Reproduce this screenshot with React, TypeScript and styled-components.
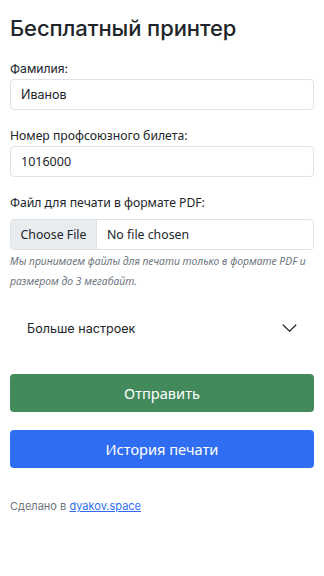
import styled, { createGlobalStyle } from "styled-components";

const GlobalStyle = createGlobalStyle`
  * { box-sizing: border-box; }
  body {
    margin: 0;
    background: #fff;
    color: #212529;
    font-family: Inter, "Noto Sans", sans-serif;
  }
`;

export default function App() {
  return (
    <>
      <GlobalStyle />
      <Page>
        <Title>Бесплатный принтер</Title>

        <Field>
          <Label>Фамилия:</Label>
          <Input defaultValue="Иванов" />
        </Field>

        <Field>
          <Label $humanist>Номер профсоюзного билета:</Label>
          <Input $humanist defaultValue="1016000" />
        </Field>

        <Field>
          <Label $humanist $gap={7}>
            Файл для печати в формате PDF:
          </Label>
          <FileBox>
            <FileButton>Choose File</FileButton>
            <FileName>No file chosen</FileName>
          </FileBox>
          <Hint>
            Мы принимаем файлы для печати только в формате PDF и размером до 3
            мегабайт.
          </Hint>
        </Field>

        <Accordion>
          <span>Больше настроек</span>
          <svg width="15" height="8" viewBox="0 0 15 8" fill="none">
            <path d="M0.8 0.8l6.7 6.4 6.7-6.4" stroke="#212529" strokeWidth="1.2" />
          </svg>
        </Accordion>

        <Button $color="#428a5b">Отправить</Button>
        <Button $color="#2f6ef3">История печати</Button>

        <Footer>
          Сделано в <a href="#">dyakov.space</a>
        </Footer>
      </Page>
    </>
  );
}

const Page = styled.div`
  padding: 13px 10px 40px;
  display: flex;
  flex-direction: column;
`;

const Title = styled.h1`
  margin: 0 0 17px;
  font-size: 22px;
  font-weight: 500;
  line-height: 30px;
  letter-spacing: -0.1px;
`;

const Field = styled.div`
  display: flex;
  flex-direction: column;
  margin-bottom: 17px;
`;

const Label = styled.label<{ $humanist?: boolean; $gap?: number }>`
  font-family: ${(p) => (p.$humanist ? '"Noto Sans", sans-serif' : "Inter, sans-serif")};
  font-size: 12.2px;
  line-height: 18px;
  margin-bottom: ${(p) => p.$gap ?? 1}px;
`;

const Input = styled.input<{ $humanist?: boolean }>`
  height: 31px;
  padding: 0 10px;
  border: 1px solid #dee2e6;
  border-radius: 4px;
  font-family: ${(p) => (p.$humanist ? '"Noto Sans", sans-serif' : "Inter, sans-serif")};
  font-size: 12.5px;
  color: #212529;
  outline: none;
`;

const FileBox = styled.div`
  display: flex;
  height: 31px;
  border: 1px solid #dee2e6;
  border-radius: 4px;
  overflow: hidden;
  font-family: "Noto Sans", sans-serif;
  font-size: 12.3px;
`;

const FileButton = styled.div`
  width: 86px;
  display: flex;
  align-items: center;
  justify-content: center;
  background: #e9ecef;
  border-right: 1px solid #dee2e6;
`;

const FileName = styled.div`
  display: flex;
  align-items: center;
  padding-left: 10px;
`;

const Hint = styled.div`
  margin-top: 1px;
  font-family: "Noto Sans", sans-serif;
  font-style: italic;
  font-size: 10.4px;
  line-height: 20px;
  color: #6c757d;
`;

const Accordion = styled.div`
  height: 46px;
  margin: -3px 0 23px;
  padding: 0 17px;
  display: flex;
  align-items: center;
  justify-content: space-between;
  font-size: 12.6px;
  color: #212529;
`;

const Button = styled.button<{ $color: string }>`
  height: 38px;
  margin-bottom: 18px;
  border: none;
  border-radius: 4px;
  background: ${(p) => p.$color};
  color: #fff;
  font-family: "Noto Sans", sans-serif;
  font-size: 14.6px;
`;

const Footer = styled.div`
  margin-top: 12px;
  font-size: 11px;
  line-height: 17px;
  color: #6c757d;

  a {
    color: #2f6ef3;
  }
`;
